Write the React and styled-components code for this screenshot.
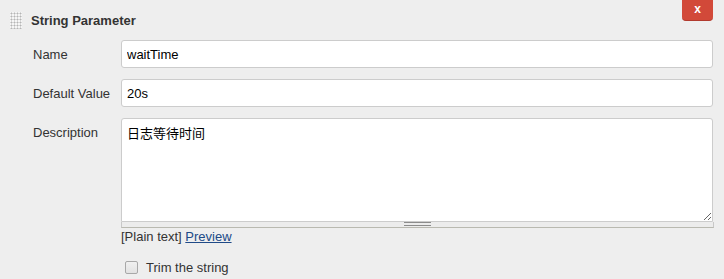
import React from "react";
import styled, { createGlobalStyle } from "styled-components";

/*
 * Styles
 */

const GlobalStyle = createGlobalStyle`
  html, body {
    margin: 0;
    padding: 0;
    background: #eeeeee;
  }
  body {
    font-family: "Liberation Sans", Arial, "Noto Sans CJK SC", sans-serif;
    font-size: 13px;
    color: #333333;
  }
`;

export const Panel = styled.div`
  position: relative;
  width: 724px;
  height: 279px;
  box-sizing: border-box;
  padding: 0 10px 0 10px;
`;

export const Header = styled.div`
  display: flex;
  align-items: center;
  height: 40px;
  gap: 9px;
`;

export const Grip = styled.div`
  width: 12px;
  height: 17px;
  background-image: radial-gradient(circle, #b5b5b5 0.9px, transparent 1.1px);
  background-size: 3px 3px;
  background-color: #f6f6f6;
`;

export const Title = styled.div`
  font-weight: bold;
  font-size: 13px;
  color: #333333;
`;

export const CloseButton = styled.button`
  position: absolute;
  top: 0;
  left: 682px;
  width: 31px;
  height: 21px;
  border: none;
  border-bottom: 1px solid #b13a2e;
  border-radius: 0 0 4px 4px;
  background: #d24939;
  color: #ffffff;
  font-family: "Liberation Sans", Arial, sans-serif;
  font-weight: bold;
  font-size: 12px;
  padding: 0 0 2px 0;
  cursor: pointer;
`;

export const Form = styled.div`
  display: grid;
  grid-template-columns: 88px 592px;
  row-gap: 11px;
  padding-left: 23px;
`;

export const Label = styled.div`
  height: 28px;
  line-height: 29px;
  color: #333333;
`;

export const TextInput = styled.input`
  box-sizing: border-box;
  width: 100%;
  height: 28px;
  margin: 0;
  border: 1px solid #cccccc;
  border-radius: 3px;
  background: #ffffff;
  padding: 0 5px;
  font-family: "Liberation Sans", Arial, sans-serif;
  font-size: 13px;
  color: #000000;
  outline: none;
`;

export const AreaWrap = styled.div`
  display: flex;
  flex-direction: column;
`;

export const TextArea = styled.textarea`
  box-sizing: border-box;
  width: 100%;
  height: 104px;
  margin: 0;
  display: block;
  border: 1px solid #cccccc;
  border-radius: 3px 3px 0 0;
  background: #ffffff;
  padding: 4px 5px;
  font-family: "Liberation Sans", Arial, "Noto Sans CJK SC", sans-serif;
  font-size: 13px;
  color: #000000;
  outline: none;
  resize: vertical;
`;

export const AreaHandle = styled.div`
  box-sizing: border-box;
  width: calc(100% + 1px);
  height: 6px;
  border: 1px solid #c8c8c8;
  border-top: none;
  border-bottom-color: #b9b9b0;
  background: #ececec;
  display: flex;
  justify-content: center;
`;

export const HandleLines = styled.div`
  width: 27px;
  height: 4px;
  box-sizing: border-box;
  border-top: 1px solid #8c8c8c;
  border-bottom: 1px solid #8c8c8c;
`;

export const Preview = styled.div`
  margin-top: 1px;
  color: #333333;
  a {
    color: #204a87;
    text-decoration: underline;
  }
`;

export const CheckRow = styled.label`
  display: flex;
  align-items: center;
  gap: 8px;
  margin-top: 16px;
  margin-left: 4px;
  color: #333333;
`;

export const CheckBox = styled.span`
  box-sizing: border-box;
  width: 13px;
  height: 13px;
  border: 1px solid #a8a8a8;
  border-radius: 2px;
  background: linear-gradient(#f0f0f0, #e2e2e2);
`;

/*
 * Component
 */

class App extends React.Component {
  render() {
    return (
      <>
        <GlobalStyle />
        <Panel>
          <Header>
            <Grip />
            <Title>String Parameter</Title>
          </Header>
          <CloseButton>x</CloseButton>
          <Form>
            <Label>Name</Label>
            <TextInput defaultValue="waitTime" />
            <Label>Default Value</Label>
            <TextInput defaultValue="20s" />
            <Label>Description</Label>
            <AreaWrap>
              <TextArea defaultValue="日志等待时间" />
              <AreaHandle>
                <HandleLines />
              </AreaHandle>
              <Preview>
                [Plain text] <a href="#">Preview</a>
              </Preview>
              <CheckRow>
                <CheckBox />
                Trim the string
              </CheckRow>
            </AreaWrap>
          </Form>
        </Panel>
      </>
    );
  }
}

export default App;
